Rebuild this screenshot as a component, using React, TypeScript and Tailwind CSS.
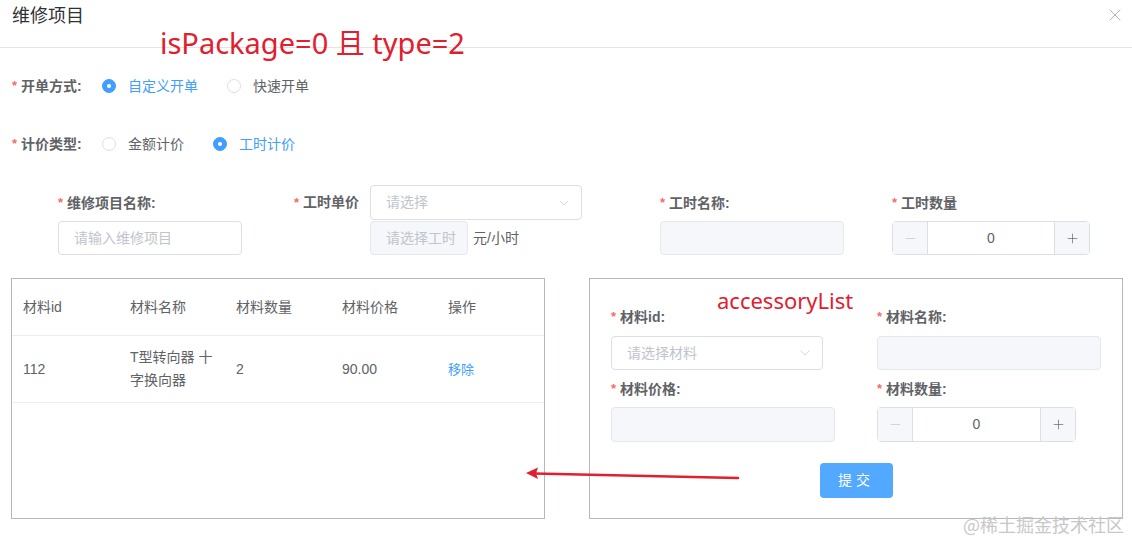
import { ChevronDown, Minus, Plus, X } from 'lucide-react';

const Star = () => <span className="mr-[4px] text-[13px] text-[#f56c6c]">*</span>;

const Radio = ({ label, checked }: { label: string; checked?: boolean }) => (
  <label className="mr-[29px] flex items-center">
    <span
      className={`flex h-[14px] w-[14px] items-center justify-center rounded-full border ${
        checked ? 'border-[#409eff] bg-[#409eff]' : 'border-[#dcdfe6] bg-white'
      }`}
    >
      {checked && <span className="h-[4px] w-[4px] rounded-full bg-white" />}
    </span>
    <span className={`ml-[12px] text-[14px] ${checked ? 'text-[#409eff]' : 'text-[#606266]'}`}>{label}</span>
  </label>
);

const FieldLabel = ({ text, className = '' }: { text: string; className?: string }) => (
  <div className={`flex items-center text-[14px] font-bold text-[#606266] ${className}`}>
    <Star />
    {text}
  </div>
);

const Select = ({ placeholder, className = '' }: { placeholder: string; className?: string }) => (
  <div className={`flex items-center justify-between rounded border border-[#dcdfe6] bg-white pl-[15px] pr-[9px] ${className}`}>
    <span className="text-[14px] text-[#c0c4cc]">{placeholder}</span>
    <ChevronDown size={16} strokeWidth={1} className="text-[#c0c4cc]" />
  </div>
);

const Disabled = ({ className = '', text }: { className?: string; text?: string }) => (
  <div className={`flex items-center whitespace-nowrap rounded border border-[#e4e7ed] bg-[#f5f7fa] pl-[15px] text-[14px] text-[#c0c4cc] ${className}`}>
    {text}
  </div>
);

const NumberInput = ({ className = '' }: { className?: string }) => (
  <div className={`flex rounded border border-[#dcdfe6] ${className}`}>
    <div className="flex w-[35px] items-center justify-center border-r border-[#dcdfe6] bg-[#f5f7fa] text-[#c0c4cc]">
      <Minus size={15} strokeWidth={1.1} />
    </div>
    <div className="flex flex-1 items-center justify-center text-[14px] text-[#606266]">0</div>
    <div className="flex w-[35px] items-center justify-center border-l border-[#dcdfe6] bg-[#f5f7fa] text-[#606266]">
      <Plus size={15} strokeWidth={1.1} />
    </div>
  </div>
);

export default function App() {
  return (
    <div className="relative h-[543px] w-[1132px] overflow-hidden bg-white font-['Liberation_Sans','Noto_Sans_CJK_SC',sans-serif]">
      {/* dialog header */}
      <div className="flex h-[48px] items-center justify-between border-b border-[#e4e4e4] pb-[15px] pl-[12px] pr-[7px]">
        <span className="text-[18px] text-[#303133]">维修项目</span>
        <X size={20} strokeWidth={0.9} className="-mt-[3px] text-[#909399]" />
      </div>

      {/* 开单方式 */}
      <div className="mt-[18px] flex h-[40px] items-center pl-[12px]">
        <FieldLabel text="开单方式:" className="w-[90px]" />
        <Radio label="自定义开单" checked />
        <Radio label="快速开单" />
      </div>

      {/* 计价类型 */}
      <div className="mt-[18px] flex h-[40px] items-center pl-[12px]">
        <FieldLabel text="计价类型:" className="w-[90px]" />
        <Radio label="金额计价" />
        <Radio label="工时计价" checked />
      </div>

      {/* 工时 row */}
      <div className="mt-[21px] flex items-start">
        <div className="ml-[58px] w-[184px]">
          <FieldLabel text="维修项目名称:" className="h-[36px]" />
          <div className="flex h-[34px] items-center rounded border border-[#dcdfe6] px-[15px] text-[14px] text-[#c0c4cc]">
            请输入维修项目
          </div>
        </div>
        <div className="ml-[52px] flex">
          <FieldLabel text="工时单价" className="h-[35px] w-[76px]" />
          <div>
            <Select placeholder="请选择" className="h-[35px] w-[212px]" />
            <div className="mt-[1px] flex items-center">
              <Disabled text="请选择工时" className="h-[34px] w-[98px]" />
              <span className="ml-[5px] text-[14px] text-[#606266]">元/小时</span>
            </div>
          </div>
        </div>
        <div className="ml-[78px] w-[184px]">
          <FieldLabel text="工时名称:" className="h-[36px]" />
          <Disabled className="h-[34px]" />
        </div>
        <div className="ml-[48px] w-[198px]">
          <FieldLabel text="工时数量" className="h-[36px]" />
          <NumberInput className="h-[34px]" />
        </div>
      </div>

      {/* panels */}
      <div className="mt-[23px] flex">
        <div className="ml-[11px] h-[241px] w-[534px] border border-[#b4b6c4]">
          <div className="grid h-[57px] grid-cols-[107px_106px_106px_106px_1fr] items-center border-b border-[#ebeef5] text-[14px] text-[#606266]">
            <div className="pl-[11px]">材料id</div>
            <div className="pl-[11px]">材料名称</div>
            <div className="pl-[11px]">材料数量</div>
            <div className="pl-[11px]">材料价格</div>
            <div className="pl-[11px]">操作</div>
          </div>
          <div className="grid h-[67px] grid-cols-[107px_106px_106px_106px_1fr] items-center border-b border-[#ebeef5] text-[14px] text-[#606266]">
            <div className="pl-[11px]">112</div>
            <div className="pl-[11px] pr-[11px] leading-[23px]">T型转向器 十字换向器</div>
            <div className="pl-[11px]">2</div>
            <div className="pl-[11px]">90.00</div>
            <div className="pl-[11px] pt-[2px] text-[13px] text-[#409eff]">移除</div>
          </div>
        </div>

        <div className="ml-[44px] h-[241px] w-[534px] border border-[#b4b6c4] pl-[21px] pt-[29px]">
          <div className="flex">
            <div className="w-[266px]">
              <FieldLabel text="材料id:" className="h-[18px]" />
              <Select placeholder="请选择材料" className="mt-[10px] h-[34px] w-[212px]" />
            </div>
            <div>
              <FieldLabel text="材料名称:" className="h-[18px]" />
              <Disabled className="mt-[10px] h-[34px] w-[224px]" />
            </div>
          </div>
          <div className="mt-[10px] flex">
            <div className="w-[266px]">
              <FieldLabel text="材料价格:" className="h-[18px]" />
              <Disabled className="mt-[9px] h-[35px] w-[224px]" />
            </div>
            <div>
              <FieldLabel text="材料数量:" className="h-[18px]" />
              <NumberInput className="mt-[9px] h-[35px] w-[199px]" />
            </div>
          </div>
          <div className="-ml-[21px] mt-[21px] flex justify-center">
            <button className="h-[35px] w-[73px] rounded bg-[#53a8ff] text-[14px] tracking-[4px] text-white">提交</button>
          </div>
        </div>
      </div>

      {/* annotations drawn over the screenshot */}
      <div className="absolute left-[160px] top-[23px] font-['Noto_Sans','Noto_Sans_CJK_SC',sans-serif] text-[29px] leading-[40px] text-[#e0202e]">
        isPackage=0 且 type=2
      </div>
      <div className="absolute left-[717px] top-[285px] font-['Noto_Sans',sans-serif] text-[22px] leading-[30px] text-[#e0202e]">
        accessoryList
      </div>
      <svg className="absolute left-0 top-0" width="1132" height="543">
        <line x1="738" y1="478" x2="534" y2="473.5" stroke="#e0202e" strokeWidth="2.6" strokeLinecap="round" />
        <polygon points="526,473 538,467.5 536,473.5 538,479" fill="#e0202e" />
      </svg>
      <div className="absolute left-[963px] top-[512px] font-['Noto_Sans_CJK_SC',sans-serif] text-[18px] leading-[24px] text-[#c8c8c8]">
        @稀土掘金技术社区
      </div>
    </div>
  );
}
